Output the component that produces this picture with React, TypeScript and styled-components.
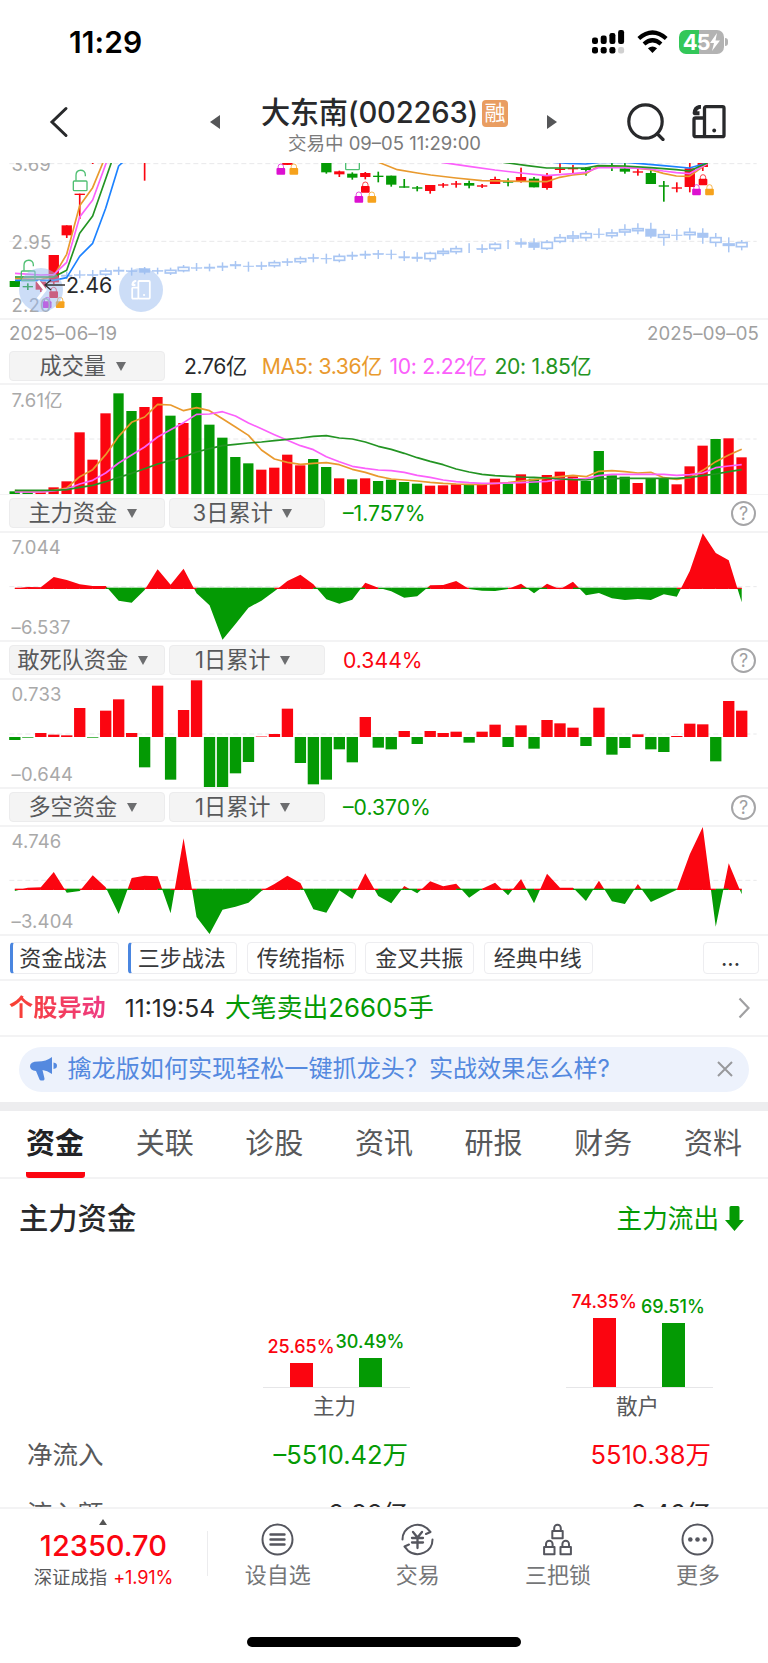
import React from "react";
import styled, { createGlobalStyle } from "styled-components";

const RED = "#fb0510";
const GREEN = "#049a04";
const ORANGE = "#e99a2e";
const PINK = "#fb60fb";
const DEEP = "#239423";
const BLUE = "#1c82ff";
const PALE = "#a9c6f3";

const Global = createGlobalStyle`
  *, *::before, *::after { box-sizing: border-box; }
  body { margin: 0; background: #fff; }
  #root { font-family: Inter, "Noto Sans CJK SC", sans-serif; color: #28292b; }
  svg { display: block; }
`;

const Page = styled.div`
  width: 768px;
  height: 1663px;
  display: flex;
  flex-direction: column;
  overflow: hidden;
  background: #fff;
  white-space: nowrap;
`;

/* ---------- status bar ---------- */
const StatusBar = styled.div`
  height: 84px;
  flex: none;
  display: flex;
  align-items: center;
  padding: 0 40px 0 69px;
`;
const Clock = styled.div`
  flex: 1;
  font-size: 30px;
  font-weight: 600;
  line-height: 36px;
  color: #000;
  letter-spacing: 0.1px;
`;
const StatusIcons = styled.div`
  display: flex;
  align-items: center;
  gap: 11.3px;
`;
const BatteryWrap = styled.div`
  display: flex;
  align-items: center;
  gap: 1px;
`;
const Battery = styled.div`
  width: 45px;
  height: 24px;
  border-radius: 7px;
  display: flex;
  align-items: center;
  justify-content: center;
  background: linear-gradient(90deg, #33c759 0 20px, #b3b3b3 20px);
  color: #fff;
  font-size: 22px;
  line-height: 24px;
  font-weight: 700;
  letter-spacing: -1.2px;
`;
const Nub = styled.div`
  width: 3px;
  height: 8px;
  border-radius: 0 3px 3px 0;
  background: #b3b3b3;
`;

/* ---------- header ---------- */
const Header = styled.header`
  height: 79px;
  flex: none;
  display: grid;
  grid-template-columns: 210px 12px 1fr 12px 68px 38px 27px 34px 42px;
  align-items: center;
  padding-bottom: 3px;
`;
const BackSlot = styled.div`
  padding-left: 49px;
`;
const TitleBlock = styled.div`
  display: flex;
  flex-direction: column;
  align-items: center;
  padding-top: 7px;
`;
const TitleLine = styled.div`
  display: flex;
  align-items: center;
  gap: 4px;
  font-size: 29.2px;
  line-height: 36px;
  font-weight: 500;
  letter-spacing: -0.2px;
`;
const Badge = styled.span`
  width: 26px;
  height: 27px;
  border-radius: 4px;
  background: #e99d61;
  color: #fff;
  font-size: 21px;
  font-weight: 400;
  line-height: 26px;
  text-align: center;
  letter-spacing: 0;
`;
const SubTitle = styled.div`
  font-size: 18.5px;
  line-height: 25px;
  color: #7b7b7b;
`;

/* ---------- charts ---------- */
const ChartBox = styled.section<{ $h: number; $line?: number }>`
  position: relative;
  height: ${(p) => p.$h}px;
  flex: none;
  overflow: hidden;
  border-bottom: ${(p) => p.$line ?? 2}px solid #f3f3f4;
`;
const AxisLabel = styled.span<{ $top: number }>`
  position: absolute;
  left: 11.5px;
  top: ${(p) => p.$top}px;
  font-size: 18.5px;
  line-height: 24px;
  letter-spacing: 0.15px;
  color: #a9a9a9;
`;
const PriceTag = styled.span`
  position: absolute;
  left: 43px;
  top: 109px;
  display: flex;
  align-items: center;
  gap: 1px;
  font-size: 21.4px;
  line-height: 26px;
`;
const FloatButton = styled.span<{ $left: number }>`
  position: absolute;
  left: ${(p) => p.$left}px;
  top: 105px;
  width: 44px;
  height: 44px;
  border-radius: 50%;
  display: flex;
  align-items: center;
  justify-content: center;
  background: rgba(154, 188, 240, 0.5);
`;
const DateRow = styled.div`
  height: 26px;
  flex: none;
  display: flex;
  justify-content: space-between;
  align-items: center;
  padding: 0 9px 1px 9px;
  font-size: 18.6px;
  letter-spacing: 0.15px;
  color: #a0a0a0;
`;
const IndicatorRow = styled.div<{ $h: number; $pt?: number }>`
  height: ${(p) => p.$h}px;
  flex: none;
  display: flex;
  align-items: center;
  gap: 4px;
  padding: ${(p) => p.$pt ?? 0}px 12px 0 9px;
  border-bottom: 2px solid #f3f3f4;
  font-size: 21.2px;
`;
const Pill = styled.button`
  width: 156px;
  height: 30px;
  border: 1px solid #ececed;
  border-radius: 4px;
  background: #f4f4f4;
  padding: 0 9px 0 0;
  display: flex;
  align-items: center;
  justify-content: center;
  gap: 9.5px;
  font: inherit;
  font-size: 22.2px;
  line-height: 28px;
  color: #58595b;
`;
const Caret = styled.span`
  width: 0;
  height: 0;
  border: 5.5px solid transparent;
  border-bottom-width: 0;
  border-top: 9px solid #6c6d6f;
`;
const Value = styled.span<{ $c: string; $ml?: number; $ls?: number }>`
  color: ${(p) => p.$c};
  margin-left: ${(p) => p.$ml ?? 0}px;
  letter-spacing: ${(p) => p.$ls ?? 0}px;
  line-height: 28px;
`;
const Spacer = styled.span`
  flex: 1;
`;
const Help = styled.span`
  width: 25px;
  height: 25px;
  border: 2px solid #a5a5a7;
  border-radius: 50%;
  color: #a0a0a2;
  font-size: 18px;
  line-height: 21px;
  text-align: center;
`;

/* ---------- chips / alert / banner ---------- */
const ChipRow = styled.div`
  height: 45px;
  flex: none;
  display: flex;
  align-items: center;
  gap: 9.6px;
  padding: 1px 9px 0 9.5px;
  border-bottom: 2px solid #f3f3f4;
`;
const Chip = styled.span<{ $marked?: boolean; $more?: boolean }>`
  width: ${(p) => (p.$more ? 56 : 109)}px;
  height: 32px;
  margin-left: ${(p) => (p.$more ? "auto" : 0)};
  border: 1px solid #ededf0;
  border-left: ${(p) => (p.$marked ? "3px solid #4a86e0" : "1px solid #ededf0")};
  padding-right: ${(p) => (p.$marked ? 3.5 : 1)}px;
  border-radius: 4px;
  font-size: 22px;
  line-height: 31px;
  text-align: center;
  color: #38393b;
`;
const AlertRow = styled.div`
  height: 56px;
  flex: none;
  display: flex;
  align-items: center;
  padding: 0 18px 0 9px;
  border-bottom: 2px solid #f3f3f4;
  font-size: 24.6px;
  line-height: 32px;
`;
const AlertTitle = styled.strong`
  font-size: 24.2px;
  font-weight: 700;
  background: linear-gradient(90deg, #f8402f, #ee3b86);
  -webkit-background-clip: text;
  background-clip: text;
  color: transparent;
`;
const AlertTime = styled.span`
  margin: 0 10px 0 19px;
`;
const AlertText = styled.span`
  flex: 1;
  color: ${GREEN};
  font-size: 25.8px;
`;
const BannerWrap = styled.div`
  height: 74px;
  flex: none;
  padding: 10px 19px 0 19px;
  border-bottom: 9px solid #ededef;
`;
const Banner = styled.div`
  height: 44.5px;
  border-radius: 23px;
  background: #edf2fc;
  display: flex;
  align-items: center;
  justify-content: space-between;
  padding: 0 16px 0 11px;
  color: #5489df;
  font-size: 24.1px;
  line-height: 32px;
`;
const BannerText = styled.span`
  flex: 1;
  margin-left: 10.5px;
`;

/* ---------- tabs ---------- */
const Tabs = styled.nav`
  height: 68px;
  flex: none;
  display: flex;
  justify-content: space-between;
  padding: 0 25.5px;
  border-bottom: 2px solid #f3f3f4;
`;
const Tab = styled.span<{ $active?: boolean }>`
  display: flex;
  width: 59px;
  justify-content: center;
  font-size: 29px;
  line-height: 65px;
  height: 67px;
  color: ${(p) => (p.$active ? "#222326" : "#58595b")};
  font-weight: ${(p) => (p.$active ? 700 : 400)};
  background: ${(p) => (p.$active ? `linear-gradient(${RED}, ${RED}) 0 100% / 100% 6px no-repeat` : "none")};
  border-radius: 0 0 3px 3px;
`;

/* ---------- capital panel ---------- */
const Panel = styled.section`
  flex: 1;
  min-height: 0;
  overflow: hidden;
`;
const PanelHead = styled.div`
  height: 78px;
  display: flex;
  align-items: center;
  justify-content: space-between;
  padding: 1px 24px 0 19px;
`;
const PanelTitle = styled.h2`
  margin: 0;
  font-size: 29.3px;
  font-weight: 500;
  line-height: 40px;
`;
const FlowState = styled.div`
  display: flex;
  align-items: center;
  gap: 6px;
  font-size: 25.6px;
  line-height: 36px;
  color: ${GREEN};
`;
const PairArea = styled.div`
  height: 168px;
  display: flex;
  justify-content: flex-end;
  align-items: flex-end;
  gap: 156px;
  padding: 0 55.5px 0 0;
`;
const Pair = styled.div`
  width: 147px;
`;
const PairBars = styled.div`
  display: flex;
  align-items: flex-end;
  justify-content: center;
  gap: 2px;
  border-bottom: 1px solid #e6e6e8;
  padding-right: 1px;
`;
const BarCol = styled.div<{ $c: string }>`
  width: 67px;
  display: flex;
  flex-direction: column;
  align-items: center;
  gap: 5px;
  font-size: 18px;
  font-weight: 500;
  line-height: 22px;
  color: ${(p) => p.$c};
`;
const Bar = styled.div<{ $h: number; $c: string }>`
  width: 23px;
  height: ${(p) => p.$h}px;
  background: ${(p) => p.$c};
`;
const PairName = styled.div`
  height: 37px;
  font-size: 21.5px;
  line-height: 37px;
  text-align: center;
  color: #58595b;
  padding-right: 3px;
`;
const FlowRow = styled.div`
  height: 59.5px;
  display: grid;
  grid-template-columns: 204px 177px 303px;
  padding-left: 27px;
  align-items: center;
  font-size: 25.5px;
  line-height: 34px;
`;
const FlowName = styled.span`
  color: #58595b;
`;
const FlowValue = styled.span<{ $c?: string }>`
  text-align: right;
  color: ${(p) => p.$c ?? "#28292b"};
`;

/* ---------- bottom bar ---------- */
const BottomBar = styled.footer`
  height: 156px;
  flex: none;
  display: flex;
  flex-direction: column;
  align-items: center;
  justify-content: space-between;
  border-top: 2px solid #f3f3f4;
  padding-bottom: 16px;
`;
const NavRow = styled.div`
  width: 768px;
  display: flex;
  height: 90px;
`;
const IndexBox = styled.div`
  width: 207px;
  display: flex;
  flex-direction: column;
  align-items: center;
  padding-top: 10px;
`;
const UpMark = styled.span`
  border: 4px solid transparent;
  border-top-width: 0;
  border-bottom: 6px solid #555;
`;
const IndexValue = styled.span`
  margin-top: 4px;
  font-size: 29px;
  font-weight: 500;
  line-height: 34px;
  color: ${RED};
`;
const IndexLine = styled.span`
  display: flex;
  gap: 6px;
  margin-top: 1px;
  font-size: 18.4px;
  line-height: 26px;
  color: #58595b;
`;
const Up = styled.span`
  color: ${RED};
  font-size: 18.2px;
  letter-spacing: -0.2px;
`;
const Rule = styled.span`
  width: 1px;
  height: 45px;
  margin-top: 22px;
  background: #ececee;
`;
const NavItem = styled.div`
  width: 140.2px;
  display: flex;
  flex-direction: column;
  align-items: center;
  gap: 4.5px;
  padding-top: 13.5px;
  font-size: 22px;
  line-height: 30px;
  color: #757678;
`;
const HomeBar = styled.div`
  width: 274px;
  height: 10px;
  border-radius: 5px;
  background: #000;
`;

/* ---------- data ---------- */
// Chart geometry is in thirds of a pixel; each column is one trading day.
const cx = (i: number) => 44.5 + 38.94 * i;

const volume: [number, "r" | "g"][] = [
  [335, "g"], [338, "g"], [338, "r"], [323, "r"], [305, "r"], [158, "r"], [240, "r"], [101, "r"],
  [41, "g"], [94, "g"], [82, "r"], [52, "r"], [108, "g"], [130, "r"], [40, "g"], [135, "g"],
  [174, "g"], [232, "g"], [251, "g"], [270, "r"], [264, "r"], [225, "r"], [257, "r"], [238, "g"],
  [262, "g"], [296, "r"], [299, "g"], [296, "r"], [304, "g"], [300, "g"], [307, "g"], [312, "g"],
  [318, "r"], [317, "r"], [314, "r"], [314, "g"], [313, "r"], [297, "r"], [312, "g"], [284, "r"],
  [297, "g"], [286, "r"], [276, "r"], [290, "r"], [304, "g"], [214, "g"], [287, "g"], [291, "g"],
  [310, "r"], [297, "g"], [295, "g"], [314, "r"], [260, "r"], [198, "r"], [178, "g"], [176, "r"], [233, "r"],
];
const ma5 = [333, 336, 337, 332, 325, 291, 270, 225, 170, 128, 112, 74, 76, 93, 84, 93, 117, 142, 167, 211, 238, 248, 254, 251, 249, 255, 269, 278, 290, 298, 301, 304, 308, 311, 313, 314, 314, 311, 309, 304, 300, 295, 291, 287, 291, 275, 273, 276, 280, 278, 294, 299, 294, 272, 246, 226, 209];
const ma10 = [337, 337, 337, 334, 328, 313, 302, 280, 250, 226, 202, 172, 150, 129, 104, 103, 96, 109, 130, 147, 165, 182, 198, 210, 231, 246, 260, 266, 271, 273, 278, 287, 293, 301, 306, 309, 311, 311, 310, 309, 307, 305, 299, 298, 297, 288, 284, 284, 284, 284, 284, 287, 285, 280, 264, 259, 255];
const ma20 = [332, 332, 332, 332, 330, 323, 317, 306, 293, 281, 267, 253, 243, 232, 217, 207, 198, 194, 190, 187, 183, 179, 175, 170, 168, 175, 178, 187, 200, 209, 221, 234, 245, 255, 268, 277, 284, 288, 290, 292, 293, 295, 298, 300, 301, 297, 297, 296, 296, 296, 296, 296, 293, 288, 283, 276, 270];
const mainFlow = [626, 621, 622, 591, 600, 613, 618, 618, 662, 668, 630, 568, 614, 566, 640, 676, 779, 732, 683, 662, 634, 603, 584, 613, 658, 671, 659, 608, 623, 634, 653, 649, 616, 615, 603, 627, 632, 633, 627, 611, 640, 611, 628, 605, 646, 639, 655, 660, 657, 660, 643, 650, 573, 460, 519, 541, 667];
const squad = [284, 277, 263, 268, 270, 188, 277, 196, 162, 263, 366, 121, 403, 194, 105, 425, 425, 384, 350, 273.5, 266, 190, 353, 417, 403, 312, 351, 215, 307, 312, 257, 296, 257, 263, 259, 292, 259, 238, 305, 240, 310, 224, 234, 247, 302, 187, 328, 308, 267, 312, 320, 272, 235, 237, 348, 167, 196];
const longShort = [738, 728, 727, 681, 743, 738, 691, 727, 807, 699, 692, 694, 805, 580, 816, 867, 794, 785, 773, 738, 717, 692, 714, 793, 803, 736, 762, 685, 753, 775, 723, 745, 709, 724, 716, 758, 731, 713, 751, 702, 775, 686, 728, 728, 768, 707, 769, 777, 717, 771, 753, 734, 628, 546, 845, 655, 748];

// [day, high, low, bodyTop, bodyBottom, hollow]
const indexCandles: [number, number, number, number, number, number][] = [
  [4, 350, 372, 360, 364, 0], [5, 346, 370, 359, 361, 0], [6, 345, 375, 358, 362, 0], [7, 340, 364, 348, 358, 1], [8, 335, 360, 345, 349, 0],
  [9, 338, 362, 347, 350, 0], [10, 336, 358, 341, 352, 0], [11, 338, 358, 346, 349, 0], [12, 338, 360, 346, 354, 1],
  [13, 330, 352, 337, 347, 1], [14, 324, 348, 338, 340, 0], [15, 326, 349, 336, 340, 0], [16, 322, 348, 333, 337, 0],
  [17, 318, 342, 328, 333, 0], [18, 320, 350, 333, 335, 0], [19, 320, 345, 331, 335, 0], [20, 316, 338, 323, 332, 1],
  [21, 310, 333, 319, 323, 0], [22, 304, 327, 311, 320, 1], [23, 296, 322, 307, 311, 0], [24, 296, 326, 310, 312, 0],
  [25, 296, 322, 304, 316, 1], [26, 290, 315, 300, 304, 0], [27, 287, 312, 297, 301, 0], [28, 285, 312, 295, 299, 0],
  [29, 284, 313, 297, 299, 0], [30, 288, 318, 305, 309, 0], [31, 292, 320, 306, 311, 0], [32, 290, 320, 295, 311, 1],
  [33, 280, 302, 289, 295, 1], [34, 272, 298, 281, 290, 1], [35, 265, 294, 279, 280, 2], [36, 268, 294, 280, 284, 0],
  [37, 262, 288, 268, 280, 1], [38, 255, 282, 268, 269, 2], [39, 250, 278, 262, 268, 0], [40, 250, 285, 263, 278, 0],
  [41, 255, 285, 262, 280, 1], [42, 237, 265, 248, 259, 1], [43, 228, 262, 243, 249, 1], [44, 228, 258, 236, 248, 1],
  [45, 220, 250, 237, 239, 0], [46, 223, 250, 234, 242, 1], [47, 208, 242, 224, 231, 1], [48, 205, 238, 221, 227, 1],
  [49, 203, 250, 222, 244, 0], [50, 225, 272, 239, 247, 1], [51, 222, 256, 240, 242, 0], [52, 218, 254, 232, 239, 1],
  [53, 220, 266, 234, 248, 0], [54, 234, 275, 248, 262, 1], [55, 247, 292, 267, 271, 1], [56, 255, 286, 263, 275, 1],
];
// [day, high, low, bodyTop, bodyBottom, colour]
const candles: [number, number, number, number, number, "r" | "g"][] = [
  [0, 378, 396, 378, 396, "g"], [1, 385, 405, 393, 397, "g"], [2, 378, 411, 380, 404, "r"], [3, 300, 387, 300, 382, "r"],
  [4, 211, 249, 211, 241, "r"], [5, 116, 192, 116, 120, "r"], [6, 10, 27, 10, 12, "r"], [10, 0, 77, 0, 10, "r"],
  [21, 10, 30, 10, 29, "r"], [24, 10, 56, 10, 52, "g"], [25, 47, 66, 49, 58, "r"], [26, 52, 74, 56, 68, "g"], [27, 51, 73, 54, 66, "r"],
  [28, 50, 82, 62, 66, "g"], [29, 62, 95, 62, 89, "g"], [30, 72, 98, 94, 98, "g"], [31, 93, 109, 97, 101, "g"],
  [32, 90, 116, 90, 108, "r"], [33, 84, 98, 88, 92, "r"], [34, 78, 98, 85, 89, "r"], [35, 77, 100, 84, 92, "g"],
  [36, 87, 99, 91, 95, "r"], [37, 65, 87, 72, 87, "r"], [38, 70, 94, 79, 83, "g"], [39, 38, 83, 66, 80, "r"],
  [40, 66, 97, 71, 97, "g"], [41, 54, 104, 60, 99, "r"], [42, 10, 54, 41, 45, "r"], [43, 30, 54, 39, 43, "r"],
  [44, 36, 62, 39, 45, "g"], [46, 10, 48, 10, 24, "g"], [47, 10, 56, 40, 50, "g"], [48, 40, 62, 49, 53, "r"],
  [49, 46, 87, 54, 87, "g"], [50, 78, 140, 91, 95, "g"], [51, 82, 112, 97, 101, "r"], [52, 20, 112, 40, 96, "r"],
  [53, 10, 48, 10, 36, "r"],
];

const trace = (ys: number[]) => ys.map((y, i) => `${cx(i)},${y}`).join(" ");
const tone = (c: "r" | "g") => (c === "r" ? RED : GREEN);

const Dash = ({ y }: { y: number }) => (
  <line x1={28} x2={2270} y1={y} y2={y} stroke="#e8e8ea" strokeWidth={3} strokeDasharray="15 9" />
);

const Lock = ({ x, y, c }: { x: number; y: number; c: string }) => (
  <g>
    <path d={`M${x - 8} ${y + 16}v-6a8 8 0 0 1 16 0v6`} fill="none" stroke={c} strokeWidth={3} opacity={0.75} />
    <rect x={x - 13} y={y + 14} width={26} height={20} rx={3} fill={c} />
  </g>
);
const LockTrio = ({ x, y }: { x: number; y: number }) => (
  <g>
    <Lock x={x} y={y} c={RED} />
    <Lock x={x - 19.5} y={y + 30} c="#dc10d0" />
    <Lock x={x + 19.5} y={y + 30} c="#f6a21c" />
  </g>
);
const OpenLock = ({ x, y }: { x: number; y: number }) => (
  <g fill="none" stroke="#4fbf72" strokeWidth={4}>
    <rect x={x - 20} y={y + 33} width={41} height={29} rx={3} />
    <path d={`M${x - 12} ${y + 32}v-16c0-20 28-20 28-2v5`} />
  </g>
);

const KLine = () => (
  <svg width="768" height="156" viewBox="0 24 2304 468">
    <Dash y={26} />
    <Dash y={259} />
    {indexCandles.map(([i, h, l, t, b, kind]) => (
      <g key={i} fill={kind === 1 ? "#fff" : PALE} stroke={PALE}>
        <line x1={cx(i)} x2={cx(i)} y1={h} y2={l} strokeWidth={4.5} />
        {kind !== 2 && <rect x={cx(i) - 16} y={t} width={32} height={b - t} strokeWidth={kind === 1 ? 5 : 1.5} />}
      </g>
    ))}
    {candles.map(([i, h, l, t, b, c]) => (
      <g key={i} fill={tone(c)}>
        <rect x={cx(i) - 2.5} y={h} width={5} height={l - h} />
        <rect x={cx(i) - 15.5} y={t} width={31} height={b - t} />
      </g>
    ))}
    <g fill="none" strokeWidth={5} strokeLinejoin="round">
      <path stroke={ORANGE} d="M45 371L122 374 161 364 200 298 239 152 278 98 310 20M2285 20" />
      <path stroke={PINK} d="M45 355L122 360 161 359 200 322 239 186 278 135 320 20" />
      <path stroke={DEEP} d="M45 366H161L200 346 239 235 278 183 335 20" />
      <path stroke={BLUE} d="M45 376H161L200 368 239 304 278 265 317 160 356 33 370 20" />
      <path stroke={BLUE} d="M1640 20Q1700 26 1757 27L1800 22 1880 22 1990 32 2068 39 2122 24" />
      <path stroke={ORANGE} d="M1136 22L1192 44 1252 54 1292 60 1368 69 1446 77 1562 79 1640 80 1679 67 1718 60 1757 56 1795 34 1873 36 1951 44 1990 55 2029 63 2068 64 2122 26" />
      <path stroke={PINK} d="M1325 22L1407 34 1485 45 1562 54 1640 62 1718 56 1757 52 1795 38 1873 38 1951 42 1990 48 2029 53 2068 56 2122 26" />
      <path stroke={DEEP} d="M1510 22L1582 32 1640 39H1757L1795 32 1873 33 1951 38 2029 44 2068 48 2122 24" />
    </g>
    <OpenLock x={240} y={45} />
    <OpenLock x={84} y={315} />
    <OpenLock x={1057} y={-18} />
    <LockTrio x={862} y={-5} />
    <LockTrio x={1096} y={79} />
    <LockTrio x={161} y={395} />
    <LockTrio x={2109} y={57} />
  </svg>
);

const VolumeChart = () => (
  <svg width="768" height="109" viewBox="0 16 2304 327">
    <Dash y={178} />
    {volume.map(([t, c], i) => (
      <rect key={i} x={cx(i) - 16} y={t} width={31} height={343 - t} fill={tone(c)} />
    ))}
    <g fill="none" strokeWidth={5} strokeLinejoin="round">
      <polyline points={trace(ma5)} stroke={ORANGE} />
      <polyline points={trace(ma10)} stroke={PINK} />
      <polyline points={trace(ma20)} stroke={DEEP} />
    </g>
  </svg>
);

const AreaChart = ({ id, data, zero, dash, top }: { id: string; data: number[]; zero: number; dash: number; top: number }) => {
  const area = `${cx(0)},${zero} ${trace(data)} ${cx(56)},${zero}`;
  return (
    <svg width="768" height="108" viewBox={`0 ${top} 2304 324`}>
      <clipPath id={`${id}-up`}><rect x="0" y={zero - 300} width="2304" height="300" /></clipPath>
      <clipPath id={`${id}-down`}><rect x="0" y={zero} width="2304" height="300" /></clipPath>
      <Dash y={dash} />
      <polygon points={area} fill={RED} clipPath={`url(#${id}-up)`} />
      <polygon points={area} fill={GREEN} clipPath={`url(#${id}-down)`} />
      {data.slice(0, 56).map((y, i) => (
        <line key={i} x1={cx(i)} x2={cx(i + 1)} y1={zero} y2={zero} stroke={y + data[i + 1] > zero * 2 ? GREEN : RED} strokeWidth={4} />
      ))}
    </svg>
  );
};

const SquadChart = () => (
  <svg width="768" height="108" viewBox="0 104 2304 324">
    <Dash y={266} />
    {squad.map((y, i) => (
      <rect key={i} x={cx(i) - 17} y={Math.min(y, 275)} width={34} height={Math.abs(275 - y)} fill={y > 275 ? GREEN : RED} />
    ))}
  </svg>
);

const Devices = ({ size, color, w }: { size: number; color: string; w: number }) => (
  <svg width={size} height={size} viewBox="0 0 34 34" fill="none" stroke={color} strokeWidth={w} strokeLinejoin="round">
    <rect x="12.5" y="1.7" width="19.5" height="30" rx="1.5" />
    <path d="M12.5 13H3.5a1.5 1.5 0 0 0-1.5 1.5v15.7a1.5 1.5 0 0 0 1.5 1.5H12.5" />
    <path d="M9 1.8Q3 1.8 2.6 8.2H7.5" strokeWidth={w * 1.2} />
    <circle cx="22.2" cy="25.5" r="1.9" fill={color} stroke="none" />
  </svg>
);

const Dropdown = ({ label }: { label: string }) => (
  <Pill>{label}<Caret /></Pill>
);

const FundRow = ({ name, span, value, color }: { name: string; span: string; value: string; color: string }) => (
  <IndicatorRow $h={38}>
    <Dropdown label={name} />
    <Dropdown label={span} />
    <Value $c={color} $ml={14}>{value}</Value>
    <Spacer />
    <Help>?</Help>
  </IndicatorRow>
);

const PairChart = ({ name, bars }: { name: string; bars: [string, number][] }) => (
  <Pair>
    <PairBars>
      {bars.map(([label, h], i) => (
        <BarCol key={label} $c={i ? GREEN : RED}>
          {label}
          <Bar $h={h} $c={i ? GREEN : RED} />
        </BarCol>
      ))}
    </PairBars>
    <PairName>{name}</PairName>
  </Pair>
);

const navStroke = { fill: "none", stroke: "#55565e", strokeWidth: 2, strokeLinecap: "round" as const, strokeLinejoin: "round" as const };

export default function App() {
  return (
    <Page>
      <Global />
      <StatusBar>
        <Clock>11:29</Clock>
        <StatusIcons>
          <svg width="33" height="24" viewBox="0 0 33 24">
            {[[0, 7.5], [8.7, 5.5], [17.4, 3], [26.1, 0]].map(([x, y], i) => (
              <g key={i}>
                <rect x={x} y={y} width="6" height={14 - y} rx="2.2" />
                <rect x={x} y="17" width="6" height="6.5" rx="2.2" fill={i === 3 ? "#d0d0d0" : "#000"} />
              </g>
            ))}
          </svg>
          <svg width="31" height="24" viewBox="0 0 31 24" fill="none" stroke="#000" strokeWidth="4.2">
            <path d="M1.8 8.5Q15.5-3.5 29.2 8.5" />
            <path d="M7 14Q15.5 6.5 24 14" />
            <path d="M15.5 23l-4.6-4.7q4.6-3.8 9.2 0z" fill="#000" stroke="none" />
          </svg>
          <BatteryWrap>
            <Battery>
              45
              <svg width="11" height="18" viewBox="0 0 11 18"><path d="M8 0L1 10h4L3 18 11 7.500H6.500z" fill="#fff" /></svg>
            </Battery>
            <Nub />
          </BatteryWrap>
        </StatusIcons>
      </StatusBar>

      <Header>
        <BackSlot>
          <svg width="20" height="32" viewBox="0 0 20 32"><path d="M17 2.500L3 16 17 29.500" fill="none" stroke="#28292b" strokeWidth="3" strokeLinecap="round" /></svg>
        </BackSlot>
        <svg width="10" height="14" viewBox="0 0 10 14"><path d="M10 0v14L0 7z" fill="#555658" /></svg>
        <TitleBlock>
          <TitleLine>大东南(002263)<Badge>融</Badge></TitleLine>
          <SubTitle>交易中 09–05 11:29:00</SubTitle>
        </TitleBlock>
        <svg width="10" height="14" viewBox="0 0 10 14"><path d="M0 0v14l10-7z" fill="#555658" /></svg>
        <span />
        <svg width="38" height="38" viewBox="0 0 38 38" fill="none" stroke="#28292b" strokeWidth="3.2">
          <circle cx="18.5" cy="18.5" r="16.7" />
          <path d="M30.5 31l5.500 5.500" strokeLinecap="round" />
        </svg>
        <span />
        <Devices size={34} color="#28292b" w={3.3} />
      </Header>

      <ChartBox $h={157}>
        <AxisLabel $top={-11}>3.69</AxisLabel>
        <AxisLabel $top={67}>2.95</AxisLabel>
        <AxisLabel $top={129.5}>2.20</AxisLabel>
        <KLine />
        <FloatButton $left={19}>
          <svg width="12" height="20" viewBox="0 0 12 20"><path d="M3 1l7 9-7 9" fill="none" stroke="#fff" strokeWidth="3" /></svg>
        </FloatButton>
        <FloatButton $left={119}><Devices size={20} color="#fff" w={3} /></FloatButton>
        <PriceTag>
          <svg width="22" height="12" viewBox="0 0 22 12"><path d="M22 6H2M8 1L2 6l6 5" fill="none" stroke="#333" strokeWidth="1.3" /></svg>
          2.46
        </PriceTag>
      </ChartBox>
      <DateRow><span>2025–06–19</span><span>2025–09–05</span></DateRow>

      <IndicatorRow $h={39} $pt={3}>
        <Dropdown label="成交量" />
        <Value $c="#28292b" $ml={15} $ls={-0.4}>2.76亿</Value>
        <Value $c={ORANGE} $ml={11} $ls={-0.4}>MA5: 3.36亿</Value>
        <Value $c={PINK} $ml={3.5} $ls={-0.3}>10: 2.22亿</Value>
        <Value $c={DEEP} $ml={3.5} $ls={-0.3}>20: 1.85亿</Value>
      </IndicatorRow>
      <ChartBox $h={110} $line={1}>
        <AxisLabel $top={2.5}>7.61亿</AxisLabel>
        <VolumeChart />
      </ChartBox>

      <FundRow name="主力资金" span="3日累计" value="–1.757%" color={GREEN} />
      <ChartBox $h={109}>
        <AxisLabel $top={2}>7.044</AxisLabel>
        <AxisLabel $top={82}>–6.537</AxisLabel>
        <AreaChart id="main" data={mainFlow} zero={625} dash={620} top={459} />
      </ChartBox>

      <FundRow name="敢死队资金" span="1日累计" value="0.344%" color={RED} />
      <ChartBox $h={109}>
        <AxisLabel $top={2}>0.733</AxisLabel>
        <AxisLabel $top={82}>–0.644</AxisLabel>
        <SquadChart />
      </ChartBox>

      <FundRow name="多空资金" span="1日累计" value="–0.370%" color={GREEN} />
      <ChartBox $h={109}>
        <AxisLabel $top={2}>4.746</AxisLabel>
        <AxisLabel $top={82}>–3.404</AxisLabel>
        <AreaChart id="ls" data={longShort} zero={733} dash={706} top={546} />
      </ChartBox>

      <ChipRow>
        <Chip $marked>资金战法</Chip>
        <Chip $marked>三步战法</Chip>
        <Chip>传统指标</Chip>
        <Chip>金叉共振</Chip>
        <Chip>经典中线</Chip>
        <Chip $more>...</Chip>
      </ChipRow>

      <AlertRow>
        <AlertTitle>个股异动</AlertTitle>
        <AlertTime>11:19:54</AlertTime>
        <AlertText>大笔卖出26605手</AlertText>
        <svg width="12" height="22" viewBox="0 0 12 22"><path d="M1.500 1.500L10.500 11l-9 9.500" fill="none" stroke="#a0a0a2" strokeWidth="2.2" /></svg>
      </AlertRow>

      <BannerWrap>
        <Banner>
          <svg width="27" height="24" viewBox="0 0 27 24" fill="#5489df">
            <path d="M8 4.500Q16 4.500 22 0v17q-5-3.500-9.500-4l2 8.500q.2 1.500-1 2h-2.500q-1 0-1.500-1L6 14Q0 13.500 0 9.300 0 4.500 8 4.500z" />
            <path d="M23.500 5.500q3.500.5 3.500 3.300t-3.500 3.200z" />
          </svg>
          <BannerText>擒龙版如何实现轻松一键抓龙头？实战效果怎么样?</BannerText>
          <svg width="16" height="16" viewBox="0 0 16 16"><path d="M1 1l14 14M15 1L1 15" stroke="#98999c" strokeWidth="2" /></svg>
        </Banner>
      </BannerWrap>

      <Tabs>
        {["资金", "关联", "诊股", "资讯", "研报", "财务", "资料"].map((t, i) => (
          <Tab key={t} $active={i === 0}>{t}</Tab>
        ))}
      </Tabs>

      <Panel>
        <PanelHead>
          <PanelTitle>主力资金</PanelTitle>
          <FlowState>
            主力流出
            <svg width="19" height="25" viewBox="0 0 19 25"><path d="M4.500 1.500q0-1.500 1.500-1.500h7q1.500 0 1.500 1.500V14h4.500L9.500 25 0 14h4.500z" fill={GREEN} /></svg>
          </FlowState>
        </PanelHead>
        <PairArea>
          <PairChart name="主力" bars={[["25.65%", 24], ["30.49%", 29]]} />
          <PairChart name="散户" bars={[["74.35%", 69], ["69.51%", 64]]} />
        </PairArea>
        <FlowRow>
          <FlowName>净流入</FlowName>
          <FlowValue $c={GREEN}>–5510.42万</FlowValue>
          <FlowValue $c={RED}>5510.38万</FlowValue>
        </FlowRow>
        <FlowRow>
          <FlowName>流入额</FlowName>
          <FlowValue>2.92亿</FlowValue>
          <FlowValue>8.46亿</FlowValue>
        </FlowRow>
      </Panel>

      <BottomBar>
        <NavRow>
          <IndexBox>
            <UpMark />
            <IndexValue>12350.70</IndexValue>
            <IndexLine>深证成指<Up>+1.91%</Up></IndexLine>
          </IndexBox>
          <Rule />
          <NavItem>
            <svg width="33" height="33" viewBox="0 0 33 33" {...navStroke}>
              <circle cx="16.5" cy="16.5" r="15" /><path d="M9.500 11.500h14M9.500 16.500h14M9.500 21.500h14" strokeWidth="2.4" />
            </svg>
            设自选
          </NavItem>
          <NavItem>
            <svg width="33" height="33" viewBox="0 0 33 33" {...navStroke}>
              <path d="M1.500 16.500C1.500 4 16-2.500 26 5.300L29.500 9l-4.500 2" />
              <path d="M31.500 16.500C31.500 29 17 35.500 7 27.700L3.500 23.500 8 21.500" />
              <path d="M12 9l4.500 5.500L21 9M16.500 14.500V25M11 15h11M11 19.500h11" strokeWidth="2.3" />
            </svg>
            交易
          </NavItem>
          <NavItem>
            <svg width="33" height="33" viewBox="0 0 33 33" {...navStroke}>
              {[[16.5, 1.5], [8.3, 17.5], [24.7, 17.5]].map(([x, y]) => (
                <g key={x}>
                  <rect x={x - 5.2} y={y + 6.5} width="10.4" height="7.3" />
                  <path d={`M${x - 3.3} ${y + 6.5}v-3a3.3 3.3 0 0 1 6.6 0v3`} />
                </g>
              ))}
            </svg>
            三把锁
          </NavItem>
          <NavItem>
            <svg width="33" height="33" viewBox="0 0 33 33" {...navStroke}>
              <circle cx="16.5" cy="16.5" r="15" />
              {[9.3, 16.5, 23.7].map((x) => <circle key={x} cx={x} cy="16.5" r="2.3" fill="#55565e" stroke="none" />)}
            </svg>
            更多
          </NavItem>
        </NavRow>
        <HomeBar />
      </BottomBar>
    </Page>
  );
}
